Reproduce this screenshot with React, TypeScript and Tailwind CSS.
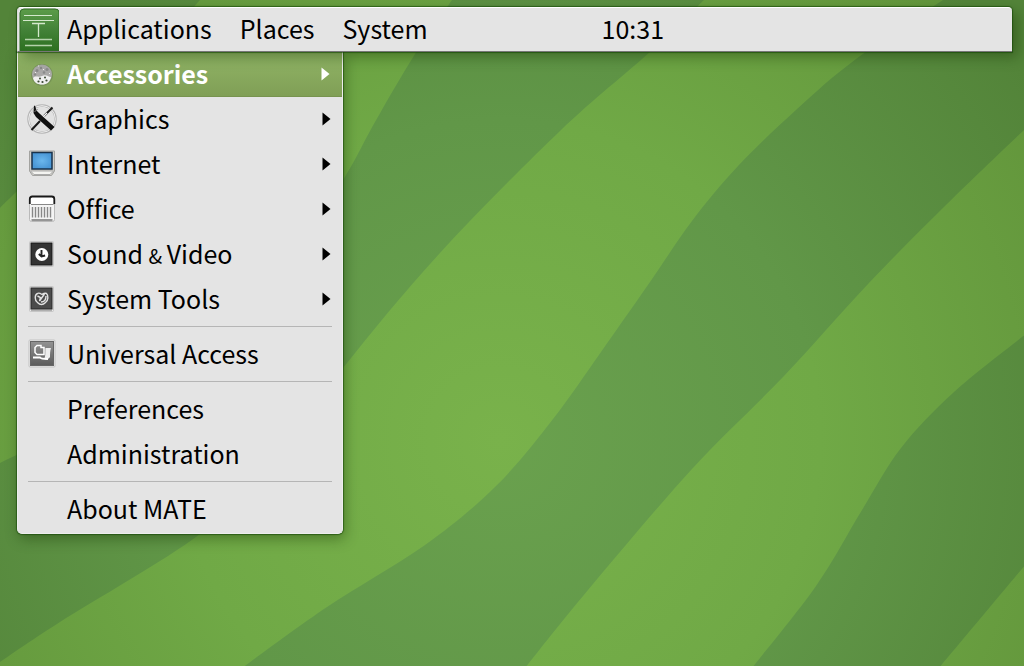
import type { ReactNode } from "react";

type Point = [number, number];

/* Cubic segments through every point of an edge (Catmull-Rom). */
function curve(points: Point[]): string {
  let d = "";
  for (let i = 0; i < points.length - 1; i++) {
    const a = points[Math.max(i - 1, 0)];
    const b = points[i];
    const c = points[i + 1];
    const e = points[Math.min(i + 2, points.length - 1)];
    d += `C${b[0] + (c[0] - a[0]) / 6} ${b[1] + (c[1] - a[1]) / 6} ${c[0] - (e[0] - b[0]) / 6} ${c[1] - (e[1] - b[1]) / 6} ${c[0]} ${c[1]}`;
  }
  return d;
}

/* A band is bounded by an edge running down and one running back up,
   closed through an optional corner of the canvas. */
function band(down: Point[], up: Point[], corner?: Point): string {
  const end = corner ? `L${corner[0]} ${corner[1]}` : "";
  return `M${down[0][0]} ${down[0][1]}${curve(down)}L${up[0][0]} ${up[0][1]}${curve(up)}${end}Z`;
}

const bands = [
  band([[200, 0], [120, 90], [0, 208]], [[0, 0], [200, 0]]),
  band(
    [[452, 0], [415, 54], [375, 122], [343, 180], [280, 275], [140, 390], [0, 463]],
    [[0, 662], [60, 622], [200, 534], [275, 460], [343, 368], [440, 253], [560, 131], [650, 52], [704, 0]],
  ),
  band(
    [[943, 0], [856, 59], [797, 109], [738, 166], [692, 221], [650, 282], [601, 352], [553, 419], [496, 486], [425, 545], [327, 607], [242, 668]],
    [[525, 668], [588, 590], [692, 469], [784, 376], [869, 283], [947, 204], [1026, 128]],
    [1026, 0],
  ),
  band(
    [[1026, 334], [954, 392], [901, 448], [862, 510], [816, 586], [752, 668]],
    [[939, 668], [1026, 564]],
  ),
];

function Wallpaper() {
  return (
    <svg
      className="absolute inset-0 h-full w-full"
      viewBox="0 0 1024 666"
      preserveAspectRatio="xMinYMin slice"
      aria-hidden="true"
    >
      <defs>
        <radialGradient id="light" gradientUnits="userSpaceOnUse" cx="500" cy="440" r="640">
          <stop offset="0" stopColor="#79b24b" />
          <stop offset="0.5" stopColor="#70a946" />
          <stop offset="1" stopColor="#62953b" />
        </radialGradient>
        <radialGradient id="dark" gradientUnits="userSpaceOnUse" cx="500" cy="440" r="640">
          <stop offset="0" stopColor="#6aa14e" />
          <stop offset="0.5" stopColor="#619748" />
          <stop offset="1" stopColor="#538439" />
        </radialGradient>
      </defs>
      <rect width="1024" height="666" fill="url(#light)" />
      <g fill="url(#dark)">
        {bands.map((d) => (
          <path key={d} d={d} />
        ))}
      </g>
    </svg>
  );
}

function AccessoriesIcon() {
  return (
    <svg viewBox="0 0 30 30" className="size-[30px]" aria-hidden="true">
      <circle cx="15" cy="16" r="11" fill="#58704a" opacity=".35" />
      <circle cx="15" cy="15.500" r="10" fill="#aaa9a8" />
      <path d="M6 19c3-3 5 0 9-2s6 1 9 1c-1 5-4 7.500-9 7.500s-8-2-9-6.500z" fill="#f0f0f0" />
      <g fill="#8a8a8a">
        <circle cx="10" cy="11.500" r="1.500" />
        <circle cx="14" cy="9" r="1.200" />
        <circle cx="20" cy="10.500" r="1.600" />
        <circle cx="17" cy="13.500" r="1.300" />
        <circle cx="8" cy="15.500" r="1.200" />
      </g>
      <g fill="#3d4a35">
        <circle cx="13" cy="19.500" r="1" />
        <circle cx="18" cy="18.500" r="1" />
        <circle cx="11.500" cy="22.500" r="1.100" />
        <circle cx="15.500" cy="23" r="1.100" />
        <circle cx="19.500" cy="21.500" r="1.100" />
      </g>
      <path d="M11 7h1M16 10.500h1M22 14.500h1M8 13.500h1" stroke="#eee" />
    </svg>
  );
}

function GraphicsIcon() {
  return (
    <svg viewBox="0 0 30 30" className="size-[30px]" aria-hidden="true">
      <circle cx="15" cy="15" r="13.500" fill="#e2e2e2" stroke="#b5b5b5" strokeWidth="2.500" />
      <circle cx="15" cy="15" r="13.300" fill="none" stroke="#ededed" />
      <path d="M25.500 3.500L17 12M13 17L4.500 26" stroke="#1b1b1b" strokeWidth="2" />
      <path d="M16 13l4-4" stroke="#f5f5f5" strokeWidth="1.200" />
      <path d="M7 1.500c1.500 0 2 2.500 2 4.500l3.500 3.500L27.500 23l-3.500 3.500L9 13 6.500 9z" fill="#111" />
      <path d="M7.500 8l3-3" stroke="#777" />
    </svg>
  );
}

function InternetIcon() {
  return (
    <svg viewBox="0 0 30 30" className="size-[30px]" aria-hidden="true">
      <defs>
        <radialGradient id="screen">
          <stop offset="0" stopColor="#6bb7ed" />
          <stop offset="1" stopColor="#4a97d6" />
        </radialGradient>
      </defs>
      <path d="M2.500 2h25v20l-3 4.500h-19l-3-4.500z" fill="#cfcec8" stroke="#a3a3a0" />
      <path d="M3.500 22h23l-3.500 3.500H7z" fill="#f4f4f1" stroke="#aaa" />
      <rect x="5" y="3.500" width="20" height="16.500" fill="url(#screen)" stroke="#19324b" strokeWidth="1.500" />
    </svg>
  );
}

function OfficeIcon() {
  return (
    <svg viewBox="0 0 30 30" className="size-[30px]" aria-hidden="true">
      <rect x="2.500" y="2.500" width="25" height="25" rx="2" fill="#f4f4f4" stroke="#b9b9b9" />
      <path d="M2.800 10V5q0-2.500 2.500-2.500h19.500q2.500 0 2.500 2.500v5" fill="#fff" stroke="#191919" strokeWidth="1.800" />
      <path d="M4 10.500h22.500" stroke="#888" />
      <path d="M5.500 13v10.500M8.500 13v10.500M11.500 13v10.500M14.500 13v10.500M17.500 13v10.500M20.500 13v10.500M23.500 13v10.500" stroke="#888" strokeWidth="1.400" />
      <path d="M4.500 26h21" stroke="#555" strokeWidth="1.200" />
    </svg>
  );
}

function SoundIcon() {
  return (
    <svg viewBox="0 0 30 30" className="size-[30px]" aria-hidden="true">
      <rect x="2.500" y="2.500" width="24" height="25" rx="1" fill="#f1f1f1" stroke="#c5c5c5" />
      <rect x="4" y="4" width="21" height="22" fill="#343434" stroke="#171717" />
      <circle cx="14.800" cy="15.500" r="6.500" fill="#fff" />
      <path d="M14.500 11v6M11.800 15l2.700 2.500 3.600-1" fill="none" stroke="#252525" strokeWidth="1.900" />
    </svg>
  );
}

function SystemToolsIcon() {
  return (
    <svg viewBox="0 0 30 30" className="size-[30px]" aria-hidden="true">
      <rect x="2.500" y="2.500" width="24" height="25" rx="1" fill="#e9e9e9" stroke="#c5c5c5" />
      <rect x="4" y="4" width="21" height="21" fill="#4b4b4b" stroke="#292929" />
      <path d="M4 26h21" stroke="#777" />
      <path
        d="M10.500 9.500c-3 1-3 7 0 9 2 2 5 3 8 0 3-2 3-7 1-9-2-1-3 0-4.500 1-1.500-1-3-2-4.500-1zM10.500 12l3 1.500-1 3.500 5-7M19 12c0 4-2 6-5 6"
        fill="none"
        stroke="#e2e2e2"
        strokeWidth="1.400"
      />
    </svg>
  );
}

function UniversalAccessIcon() {
  return (
    <svg viewBox="0 0 30 30" className="size-[30px]" aria-hidden="true">
      <defs>
        <linearGradient id="tile" x2="0" y2="1">
          <stop offset="0" stopColor="#939393" />
          <stop offset="1" stopColor="#5b5b5b" />
        </linearGradient>
      </defs>
      <rect x="2" y="1" width="26" height="27" rx="1" fill="#ededed" stroke="#c3c3c3" />
      <rect x="3.500" y="2.500" width="23" height="24" fill="url(#tile)" stroke="#666" />
      <path d="M8 8.500l2-2h4v2h3v7H10l-2-2z" fill="none" stroke="#fff" strokeWidth="1.500" />
      <path d="M18.500 9H24c-1 3-1 6-1 9-1 2-4 3-6 2 2-3 1-7 1.500-11z" fill="#eee" />
      <path d="M6 18.500h7c1 1.500 4 1.500 8 1.500" fill="none" stroke="#fff" strokeWidth="1.800" />
    </svg>
  );
}

function MateLogo() {
  return (
    <svg viewBox="0 0 40 43" className="h-[43px] w-10" aria-hidden="true">
      <defs>
        <linearGradient id="logo" x2="0" y2="1">
          <stop offset="0" stopColor="#5c9c49" />
          <stop offset="0.5" stopColor="#438238" />
          <stop offset="1" stopColor="#2c701f" />
        </linearGradient>
      </defs>
      <path d="M1 43V5q0-4 4-4h31q4 0 4 3v39z" fill="url(#logo)" stroke="#326d27" />
      <g stroke="#d4e8cc" fill="none">
        <path d="M5 7.500h28M4 12.500h31" />
        <path d="M13 15.500h13M19.500 16v13" strokeWidth="1.300" />
        <path d="M6 31.500h27M6 37.500h27" strokeWidth="1.500" opacity=".8" />
      </g>
    </svg>
  );
}

interface Entry {
  label: ReactNode;
  icon?: ReactNode;
  submenu?: boolean;
  active?: boolean;
}

const groups: Entry[][] = [
  [
    { label: "Accessories", icon: <AccessoriesIcon />, submenu: true, active: true },
    { label: "Graphics", icon: <GraphicsIcon />, submenu: true },
    { label: "Internet", icon: <InternetIcon />, submenu: true },
    { label: "Office", icon: <OfficeIcon />, submenu: true },
    {
      label: (
        <>
          Sound <span className="text-xl">&amp; </span>Video
        </>
      ),
      icon: <SoundIcon />,
      submenu: true,
    },
    { label: "System Tools", icon: <SystemToolsIcon />, submenu: true },
  ],
  [{ label: "Universal Access", icon: <UniversalAccessIcon /> }],
  [{ label: "Preferences" }, { label: "Administration" }],
  [{ label: "About MATE" }],
];

function MenuItem({ label, icon, submenu, active }: Entry) {
  return (
    <button
      type="button"
      role="menuitem"
      aria-haspopup={submenu ? "menu" : undefined}
      className={
        active
          ? "flex h-[45px] w-full items-center border-b border-[#77934f] bg-linear-to-b from-[#91b566] to-[#809f56] pr-3 pl-[9px] text-left font-bold text-white"
          : "flex h-[45px] w-full items-center pr-[11px] pb-0.5 pl-[9px] text-left text-black"
      }
    >
      <span className="mr-[9px] flex w-[31px] shrink-0">{icon}</span>
      <span className="flex-1 pb-0.5 whitespace-nowrap">{label}</span>
      {submenu && (
        <svg viewBox="0 0 9 14" className="h-[14px] w-[9px]" fill="currentColor" aria-hidden="true">
          <path d="M0.500 0.500L8.500 7L0.500 13.500Z" />
        </svg>
      )}
    </button>
  );
}

export default function App() {
  return (
    <div className="relative min-h-screen overflow-hidden bg-[#62953b] font-['Noto_Sans_CJK_SC','Noto_Sans',sans-serif] text-[25px] leading-[36px] text-black [font-variant-ligatures:none]">
      <Wallpaper />
      <div className="relative pt-[7px] pr-3 pb-8 pl-[17px]">
        <header className="relative z-10 flex h-[45px] items-center rounded-t-[4px] border-t border-b border-l border-t-white border-b-[#777] border-l-[#dcdcdc] bg-[#e4e4e4] shadow-[0_0_1px_1px_rgba(20,70,5,0.65),6px_5px_14px_rgba(20,50,0,0.4)]">
          <nav className="flex items-center gap-7" aria-label="Desktop">
            <button type="button" className="flex items-center gap-2 pl-px">
              <MateLogo />
              <span className="pb-1">Applications</span>
            </button>
            <button type="button" className="pb-1">Places</button>
            <button type="button" className="pb-1">System</button>
          </nav>
          <time className="ml-[174px] pb-1">10:31</time>
        </header>
        <div
          role="menu"
          aria-label="Applications"
          className="w-[326px] rounded-b-[5px] border-r border-b border-l border-[#ededed] bg-[#e4e4e4] pb-px shadow-[0_0_1px_1px_rgba(20,70,5,0.6),2px_5px_14px_rgba(20,50,0,0.4)]"
        >
          {groups.map((group, index) => (
            <div key={index}>
              {index > 0 && <hr className="mx-[10px] mt-1 mb-[5px] border-[#b5b5b5]" />}
              {group.map((entry, row) => (
                <MenuItem key={row} {...entry} />
              ))}
            </div>
          ))}
        </div>
      </div>
    </div>
  );
}
